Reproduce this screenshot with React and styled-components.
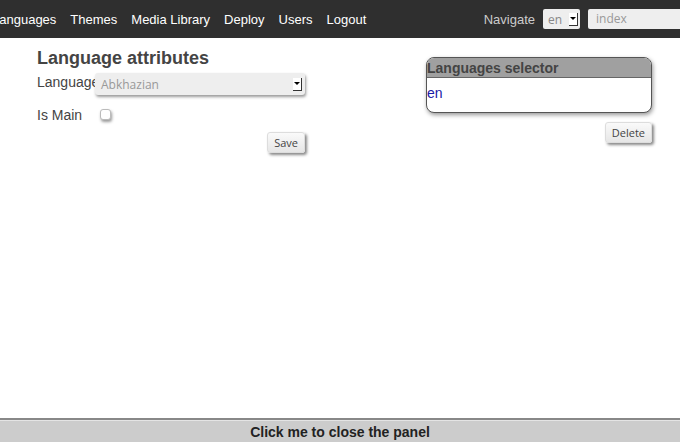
import React from 'react';
import styled, { createGlobalStyle } from 'styled-components';

const GlobalStyle = createGlobalStyle`
  html, body {
    margin: 0;
    padding: 0;
    background: #fff;
    font-family: "Liberation Sans", Arial, sans-serif;
  }
  #root {
    height: 442px;
    overflow: hidden;
  }
`;

const Page = styled.div`
  display: flex;
  flex-direction: column;
  height: 442px;
  width: 680px;
  overflow: hidden;
`;

const TopBar = styled.header`
  display: flex;
  align-items: center;
  justify-content: space-between;
  height: 38px;
  background: #2f2f2f;
  flex-shrink: 0;
`;

const Menu = styled.ul`
  display: flex;
  gap: 14px;
  margin: 1px 0 0 -8px;
  padding: 0;
  list-style: none;
`;

const MenuItem = styled.li`
  color: #fff;
  font-size: 13px;
  line-height: 16px;
`;

const NavTools = styled.div`
  display: flex;
  align-items: center;
  gap: 8px;
  margin-right: -10px;
`;

const NavLabel = styled.span`
  color: #ccc;
  font-size: 13px;
`;

const MiniSelect = styled.div`
  display: flex;
  align-items: center;
  justify-content: space-between;
  box-sizing: border-box;
  width: 37px;
  height: 20px;
  padding: 0 2px 0 5px;
  background: #eee;
  border-radius: 2px;
  font-family: "Open Sans", sans-serif;
  font-size: 12px;
  color: #888;
`;

const Arrow = styled.span`
  display: inline-flex;
  align-items: center;
  justify-content: center;
  width: 9px;
  height: 13px;
  background: #fff;
  border-right: 1px solid #333;
  border-bottom: 1px solid #333;
  box-sizing: border-box;
  &::after {
    content: '';
    border-left: 3px solid transparent;
    border-right: 3px solid transparent;
    border-top: 3px solid #000;
  }
`;

const SearchBox = styled.div`
  box-sizing: border-box;
  width: 102px;
  height: 20px;
  padding: 0 8px;
  background: #eee;
  border-radius: 2px;
  font-family: "Open Sans", sans-serif;
  font-size: 12px;
  line-height: 20px;
  color: #999;
`;

const Content = styled.main`
  flex: 1;
  display: flex;
  justify-content: space-between;
  padding: 10px 28px 0 37px;
`;

const FormColumn = styled.section`
  display: flex;
  flex-direction: column;
  width: 268px;
`;

const Heading = styled.h2`
  margin: 0;
  font-size: 18px;
  line-height: 20px;
  font-weight: bold;
  color: #444;
`;

const FieldRow = styled.div`
  display: flex;
  align-items: flex-start;
  margin-top: ${(p) => p.$top}px;
`;

const Label = styled.span`
  width: ${(p) => p.$width}px;
  font-size: 14px;
  line-height: 16px;
  color: #444;
`;

const Select = styled.div`
  display: flex;
  align-items: center;
  justify-content: space-between;
  box-sizing: border-box;
  width: 210px;
  height: 22px;
  margin-top: -1px;
  padding: 0 3px 0 6px;
  background: #eee;
  border-radius: 3px;
  box-shadow: 1px 2px 3px #999;
  font-family: "Open Sans", sans-serif;
  font-size: 12px;
  color: #999;
`;

const Check = styled.span`
  width: 9px;
  height: 9px;
  margin-top: 2px;
  border: 1px solid #bbb;
  border-radius: 3px;
  background: #fff;
  box-shadow: 1px 2px 3px #999;
`;

const ButtonRow = styled.div`
  display: flex;
  justify-content: flex-end;
  margin-top: ${(p) => p.$top}px;
`;

const Button = styled.button`
  box-sizing: border-box;
  height: 21px;
  padding: 0 6px;
  border: 1px solid #ddd;
  border-radius: 3px;
  background: linear-gradient(#fafafa, #e6e6e6);
  box-shadow: 2px 2px 3px #888;
  font-family: "Open Sans", sans-serif;
  font-size: 11px;
  color: #444;
`;

const SideColumn = styled.aside`
  display: flex;
  flex-direction: column;
  width: 226px;
  margin-top: 9px;
`;

const Panel = styled.div`
  box-sizing: border-box;
  height: 56px;
  border: 1px solid #555;
  border-radius: 8px;
  overflow: hidden;
  background: #fff;
  box-shadow: 1px 2px 4px #999;
`;

const PanelTitle = styled.div`
  height: 19px;
  background: #a0a0a0;
  border-bottom: 1px solid #666;
  font-size: 14px;
  line-height: 20px;
  font-weight: bold;
  color: #444;
`;

const LangLink = styled.div`
  padding-top: 7px;
  font-size: 14px;
  color: #1a1aa6;
`;

const BottomBar = styled.footer`
  flex-shrink: 0;
  height: 22px;
  border-top: 2px solid #888;
  box-shadow: inset 0 1px 0 #e4e4e4;
  background: #cccccc;
  text-align: center;
  font-size: 14px;
  line-height: 24px;
  font-weight: bold;
  color: #222;
`;

const menu = ['Languages', 'Themes', 'Media Library', 'Deploy', 'Users', 'Logout'];

export default function App() {
  return (
    <Page>
      <GlobalStyle />
      <TopBar>
        <Menu>
          {menu.map((m) => (
            <MenuItem key={m}>{m}</MenuItem>
          ))}
        </Menu>
        <NavTools>
          <NavLabel>Navigate</NavLabel>
          <MiniSelect>
            en <Arrow />
          </MiniSelect>
          <SearchBox>index</SearchBox>
        </NavTools>
      </TopBar>
      <Content>
        <FormColumn>
          <Heading>Language attributes</Heading>
          <FieldRow $top={6}>
            <Label $width={58}>Language</Label>
            <Select>
              Abkhazian <Arrow />
            </Select>
          </FieldRow>
          <FieldRow $top={12}>
            <Label $width={63}>Is Main</Label>
            <Check />
          </FieldRow>
          <ButtonRow $top={9}>
            <Button>Save</Button>
          </ButtonRow>
        </FormColumn>
        <SideColumn>
          <Panel>
            <PanelTitle>Languages selector</PanelTitle>
            <LangLink>en</LangLink>
          </Panel>
          <ButtonRow $top={9}>
            <Button>Delete</Button>
          </ButtonRow>
        </SideColumn>
      </Content>
      <BottomBar>Click me to close the panel</BottomBar>
    </Page>
  );
}
